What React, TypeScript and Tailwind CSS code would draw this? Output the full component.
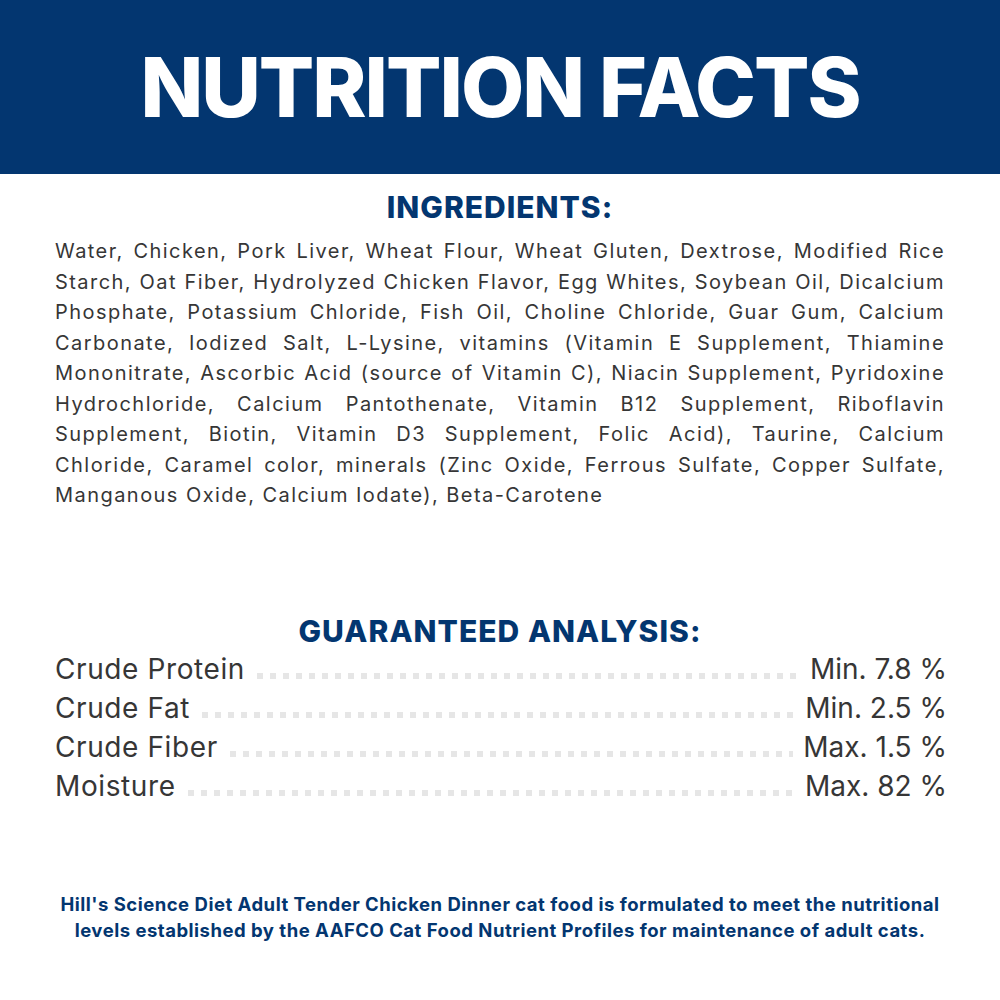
import React from "react";

const lines = [
  "Water, Chicken, Pork Liver, Wheat Flour, Wheat Gluten, Dextrose, Modified Rice",
  "Starch, Oat Fiber, Hydrolyzed Chicken Flavor, Egg Whites, Soybean Oil, Dicalcium",
  "Phosphate, Potassium Chloride, Fish Oil, Choline Chloride, Guar Gum, Calcium",
  "Carbonate, Iodized Salt, L-Lysine, vitamins (Vitamin E Supplement, Thiamine",
  "Mononitrate, Ascorbic Acid (source of Vitamin C), Niacin Supplement, Pyridoxine",
  "Hydrochloride, Calcium Pantothenate, Vitamin B12 Supplement, Riboflavin",
  "Supplement, Biotin, Vitamin D3 Supplement, Folic Acid), Taurine, Calcium",
  "Chloride, Caramel color, minerals (Zinc Oxide, Ferrous Sulfate, Copper Sulfate,",
];
const lastLine = "Manganous Oxide, Calcium Iodate), Beta-Carotene";

const rows = [
  ["Crude Protein", "Min. 7.8 %"],
  ["Crude Fat", "Min. 2.5 %"],
  ["Crude Fiber", "Max. 1.5 %"],
  ["Moisture", "Max. 82 %"],
];

export default function App() {
  return (
    <div className="w-[1000px] h-[1000px] bg-white flex flex-col font-['Inter',sans-serif]">
      <div className="h-[174px] bg-[#033670] flex items-center justify-center shrink-0">
        <h1 className="text-white font-extrabold text-[82px] leading-none tracking-[-2px] mt-[2px]">
          NUTRITION FACTS
        </h1>
      </div>

      <h2 className="mt-[18px] text-center text-[#033670] font-extrabold text-[30px] leading-[30px] tracking-[1px]">
        INGREDIENTS:
      </h2>

      <div className="mt-[14px] px-[55px] text-[#363636] text-[20px] leading-[30.5px] tracking-[1.45px]">
        {lines.map((l) => (
          <div key={l} className="text-justify [text-align-last:justify] whitespace-nowrap">
            {l}
          </div>
        ))}
        <div>{lastLine}</div>
      </div>

      <h2 className="mt-[105px] text-center text-[#033670] font-extrabold text-[30px] leading-[30px] tracking-[1.05px]">
        GUARANTEED ANALYSIS:
      </h2>

      <div className="mt-[4px] pl-[55px] pr-[53px] text-[#363636] text-[28px]">
        {rows.map(([label, value]) => (
          <div key={label} className="h-[39px] flex items-baseline leading-[39px]">
            <span className="tracking-[0.6px]">{label}</span>
            <div className="flex-1 ml-[12px] mr-[10px] h-[6px] bg-[linear-gradient(to_right,#e6e6e6_6px,transparent_6px)] bg-[length:13px_6px] bg-repeat-x" />
            <span>{value}</span>
          </div>
        ))}
      </div>

      <p className="mt-[85px] text-center text-[#033670] font-bold text-[18.5px] leading-[26px] tracking-[0.5px]">
        Hill's Science Diet Adult Tender Chicken Dinner cat food is formulated to meet the nutritional
        <br />
        levels established by the AAFCO Cat Food Nutrient Profiles for maintenance of adult cats.
      </p>
    </div>
  );
}
